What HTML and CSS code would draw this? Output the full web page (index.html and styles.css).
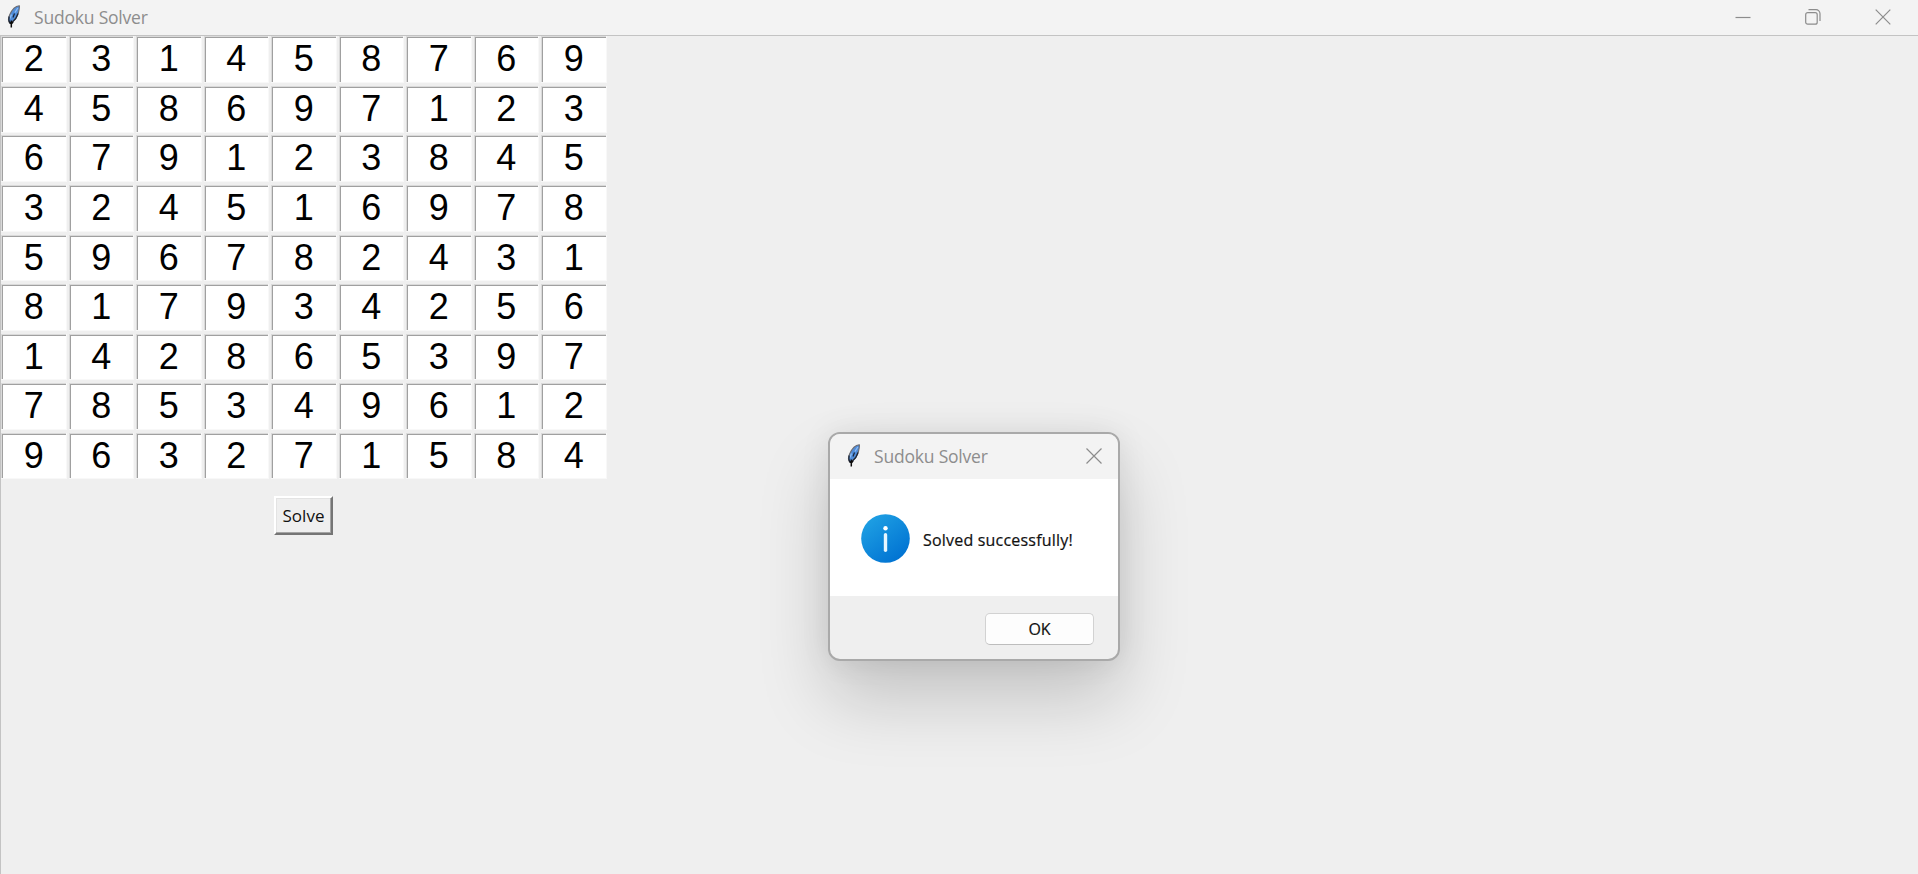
FILE: index.html
```html
<!DOCTYPE html>
<html lang="en">
<head>
<meta charset="utf-8">
<title>Sudoku Solver</title>
<link rel="stylesheet" href="styles.css">
</head>
<body>
<svg width="0" height="0" class="defs" aria-hidden="true">
  <symbol id="feather" viewBox="0 0 14 24">
    <path d="M12.300.8C9 1 5 4.500 2.600 10c-1.500 3.500-1.400 6.500.2 8 3.500-1.500 7.500-5.500 8.700-10.500.7-3 1.200-5 .8-6.700Z" fill="#4f8cda" stroke="#6b6b70" stroke-width="1.100"/>
    <path d="M10.800 3 8 7.500M4.500 9.500 3 13.500" fill="none" stroke="#8dbbf2" stroke-width="1.300"/>
    <path d="M2.200 11.500c-.6 2.500-.4 5 .9 6.500M7.500 8.500l-1.500 4M11 8.500c-1 3.500-3 6.500-5.500 8.500" fill="none" stroke="#1c2536" stroke-width="1.200"/>
    <path d="M4.300 15.500v7M2.700 17.500l1.600 1.500 1.800-2" fill="none" stroke="#0c0c0c" stroke-width="1.500"/>
  </symbol>
</svg>
<div class="window">
  <header class="titlebar">
    <svg class="feather"><use href="#feather"/></svg>
    <span class="title">Sudoku Solver</span>
    <div class="controls">
      <svg width="16" height="16" viewBox="0 0 16 16"><path d="M.5 8.500h15"/></svg>
      <svg width="16" height="16" viewBox="0 0 16 16"><rect x=".7" y="3.700" width="11.500" height="11.500" rx="2"/><path d="M3.500.7H11a4 4 0 0 1 4 4V12"/></svg>
      <svg width="16" height="16" viewBox="0 0 16 16"><path d="m.7.7 14.600 14.600M15.300.7.7 15.300"/></svg>
    </div>
  </header>
  <main class="client">
    <div class="board" id="board"></div>
    <button class="solve">Solve</button>
  </main>
</div>
<section class="dialog">
  <header class="dialog-title">
    <svg class="feather"><use href="#feather"/></svg>
    <span class="title">Sudoku Solver</span>
    <svg class="close" width="16" height="16" viewBox="0 0 16 16"><path d="m.5.5 15 15M15.500.5l-15 15"/></svg>
  </header>
  <div class="dialog-body">
    <svg class="info" width="49" height="49" viewBox="0 0 49 49">
      <defs><linearGradient id="blue" x1=".15" y1=".1" x2=".8" y2=".95"><stop offset="0" stop-color="#1e9fe3"/><stop offset="1" stop-color="#0072d2"/></linearGradient></defs>
      <circle cx="24.500" cy="24.500" r="24.300" fill="url(#blue)"/>
      <circle cx="24.500" cy="14.300" r="2.200" fill="#fff"/>
      <path d="M24.500 20.800v15.500" stroke="#e8f6ff" stroke-width="3.400" stroke-linecap="round"/>
    </svg>
    <span class="message">Solved successfully!</span>
  </div>
  <footer class="dialog-footer"><button class="ok">OK</button></footer>
</section>
<script src="board.js"></script>
</body>
</html>
```
FILE: styles.css
```css
* { box-sizing: border-box; }
body { margin: 0; background: #efefef; overflow: hidden; font-family: "Open Sans", "Noto Sans", sans-serif; }
.defs { position: absolute; }
.window { width: 1918px; height: 874px; display: flex; flex-direction: column; }
.titlebar { height: 36px; flex: none; display: flex; align-items: center; padding: 0 10px 2px 7px; background: #f3f3f3; border-bottom: 1px solid #c3c3c3; }
.feather { width: 14px; height: 24px; flex: none; }
.title { margin-left: 13px; font-size: 17.5px; line-height: 24px; letter-spacing: -0.2px; color: #8d8d8d; white-space: nowrap; }
.controls { display: flex; gap: 54px; margin-left: auto; margin-right: 17px; padding-bottom: 0; }
.controls svg, .close { fill: none; stroke: #8c8c8c; stroke-width: 1.2; }
.client { flex: 1; border-left: 1px solid #c3c3c3; }
.board { display: grid; grid-template-columns: repeat(9, 67.500px); grid-template-rows: repeat(9, 49.560px); width: 608px; padding-top: .4px; }
.cell { width: 65.600px; height: 46.700px; padding-left: 1px; background: #fff; border: solid #f8f8f8; border-width: 0 1px 1px 0; box-shadow: inset 1px 1px #dadada, inset 2px 2px #a0a0a0; font: 36px/46px "Liberation Sans", Arial, sans-serif; text-align: center; color: #000; }
.solve { display: block; width: 59px; height: 39px; margin: 13.600px 0 0 273px; padding: 0; background: #efefef; border: 2px solid; border-color: #fff #757575 #757575 #fff; box-shadow: inset -1px -1px #a5a5a5, inset 1px 1px #e3e3e3; font: 17px/35px "Open Sans", sans-serif; color: #111; }
.dialog { position: absolute; left: 828px; top: 432px; width: 292px; height: 229px; border: 2px solid #a9a9a9; border-radius: 12px; overflow: hidden; display: flex; flex-direction: column; background: #efefef; box-shadow: 0 38px 70px rgba(0, 0, 0, .18), 0 0 30px rgba(0, 0, 0, .08); }
.dialog-title { height: 45px; flex: none; display: flex; align-items: center; padding: 0 16px 2px 17px; background: #f3f3f3; }
.close { margin-left: auto; }
.dialog-body { height: 117px; flex: none; display: flex; align-items: center; padding: 1px 0 0 31px; background: #fff; }
.message { margin: 3px 0 0 13px; font-size: 16px; letter-spacing: .2px; color: #111; white-space: nowrap; -webkit-text-stroke: .2px #111; }
.dialog-footer { flex: 1; display: flex; justify-content: flex-end; padding: 16.500px 24px 0 0; }
.ok { width: 109px; height: 32px; padding: 0; background: #fdfdfd; border: 1px solid #d2d2d2; border-bottom-color: #bdbdbd; border-radius: 5px; font: 16px/30px "Open Sans", sans-serif; color: #111; -webkit-text-stroke: .2px #111; }
```
FILE: board.js
```js
const rows = [
  "231458769",
  "458697123",
  "679123845",
  "324516978",
  "596782431",
  "817934256",
  "142865397",
  "785349612",
  "963271584"
];
const board = document.getElementById("board");
for (const digit of rows.join("")) {
  const cell = document.createElement("div");
  cell.className = "cell";
  cell.textContent = digit;
  board.append(cell);
}
```
